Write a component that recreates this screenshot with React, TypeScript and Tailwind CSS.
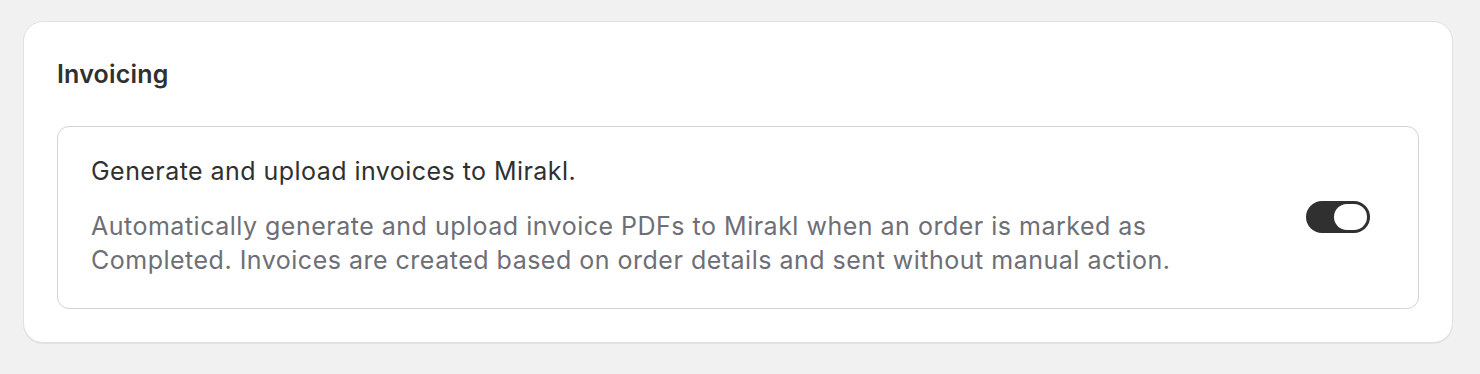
import React from 'react';

const Toggle: React.FC<{ on: boolean }> = ({ on }) => {
  return (
    <div
      className={`flex h-[32px] w-[64px] shrink-0 items-center rounded-full px-[3px] ${
        on ? 'justify-end bg-[#303030]' : 'justify-start bg-[#cccccc]'
      }`}
    >
      <div className="h-[26px] w-[33px] rounded-full bg-white" />
    </div>
  );
};

export default function App() {
  return (
    <div
      className="min-h-[374px] bg-[#f1f1f1] pl-[23px] pt-[21px]"
      style={{ fontFamily: 'Inter, "Noto Sans", sans-serif' }}
    >
      <div className="w-[1430px] rounded-[20px] border border-[#e1e1e1] bg-white px-[33px] pb-[33px] pt-[37px] shadow-[0_1px_0_rgba(0,0,0,0.06)]">
        <h2 className="text-[25px] font-semibold leading-[30px] tracking-[0.2px] text-[#303030]">Invoicing</h2>
        <div className="mt-[37px] flex items-center justify-between rounded-[12px] border border-[#d4d4d8] pb-[31px] pl-[33px] pr-[48px] pt-[29px]">
          <div className="flex flex-col gap-[23px]">
            <p className="text-[25px] leading-[30px] tracking-[0.45px] text-[#303030]">
              Generate and upload invoices to Mirakl.
            </p>
            <p className="max-w-[1100px] text-[25px] leading-[34px] tracking-[0.5px] text-[#6e6e76]">
              Automatically generate and upload invoice PDFs to Mirakl when an order is marked as Completed. Invoices
              are created based on order details and sent without manual action.
            </p>
          </div>
          <Toggle on />
        </div>
      </div>
    </div>
  );
}
